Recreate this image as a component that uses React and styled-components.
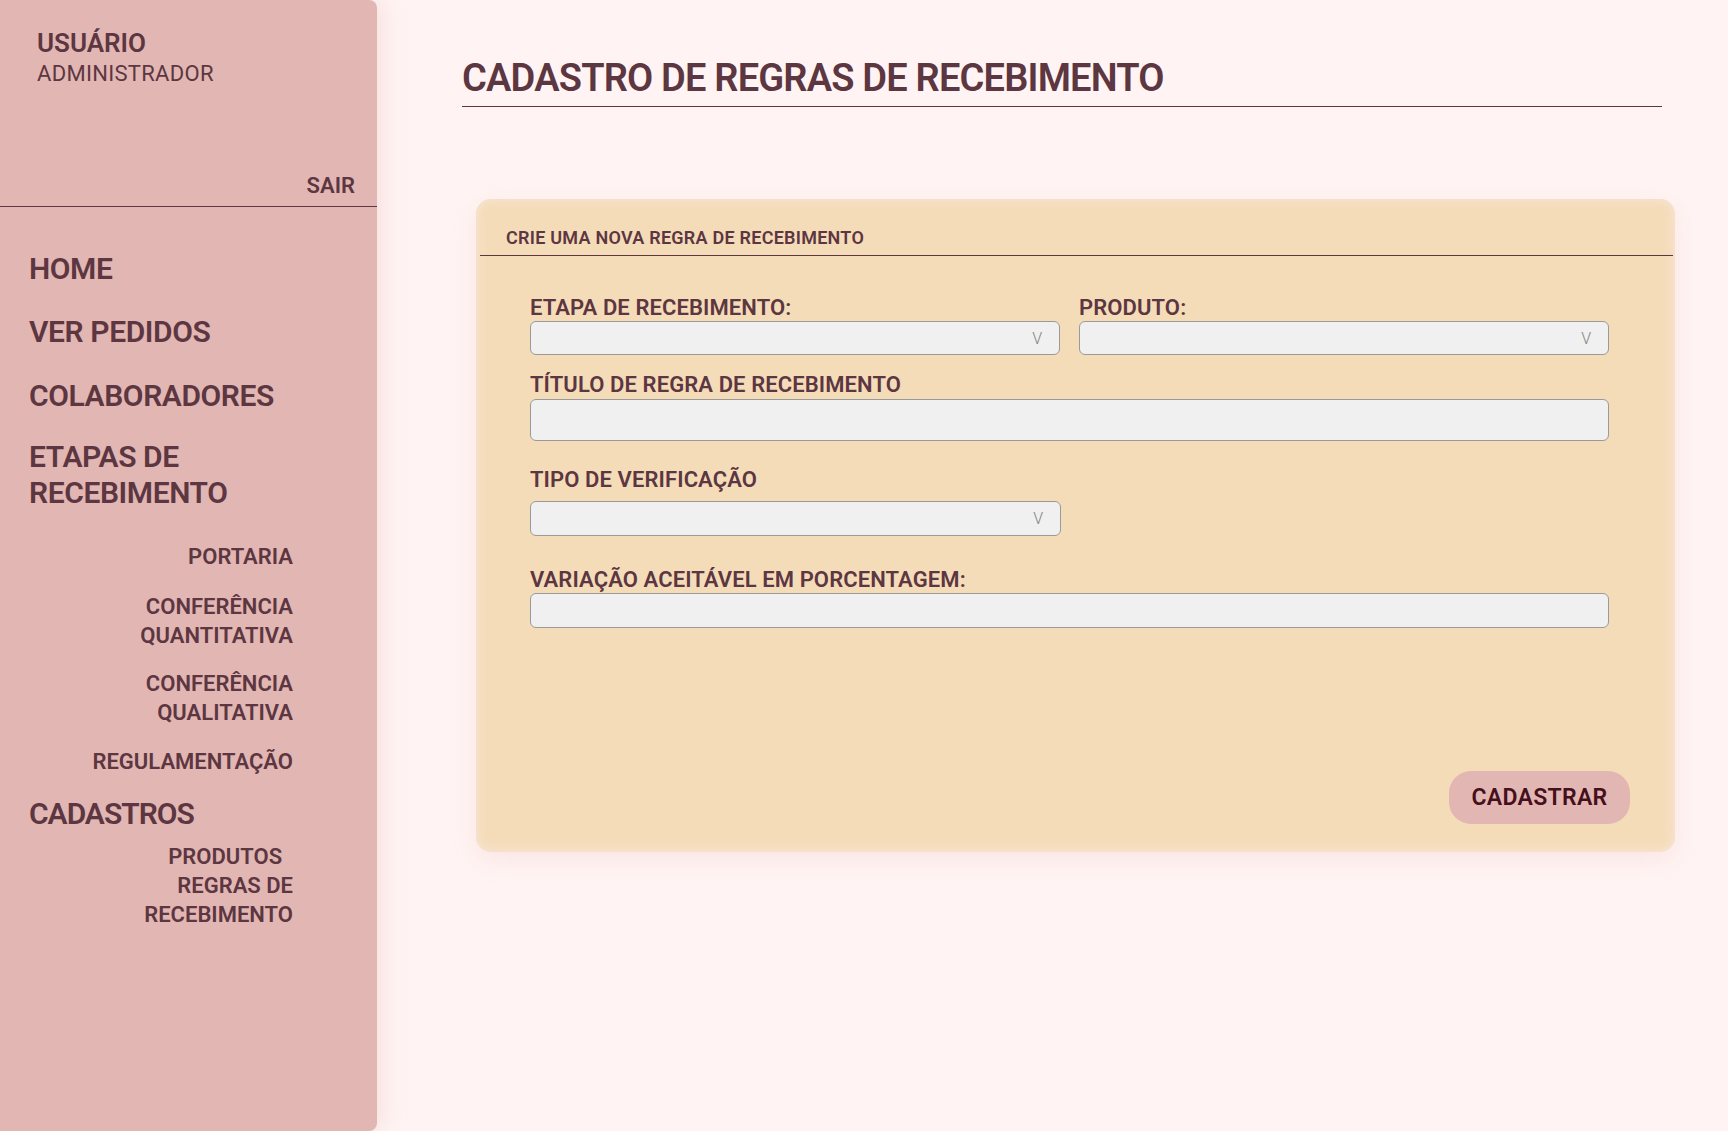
import React from 'react';
import styled, { createGlobalStyle } from 'styled-components';

const wine = '#5c3641';
const rose = '#e2b6b2';

const GlobalStyle = createGlobalStyle`
  html, body {
    margin: 0;
    padding: 0;
    background-color: #fff4f3;
    font-family: Roboto, "Noto Sans", sans-serif;
    color: ${wine};
  }
  * {
    box-sizing: border-box;
  }
`;

const PageStyled = styled.div`
  display: flex;
  min-height: 100vh;
`;

/* ---------- sidebar ---------- */

const SidebarStyled = styled.aside`
  flex: 0 0 377px;
  height: 100vh;
  background-color: ${rose};
  border-radius: 0 8px 8px 0;
  box-shadow: 6px 0 22px rgba(232, 190, 190, 0.35);
  display: flex;
  flex-direction: column;
`;
const UserBoxStyled = styled.div`
  height: 207px;
  padding: 28px 22px 7px 37px;
  border-bottom: 1px solid ${wine};
  display: flex;
  flex-direction: column;
`;
const UserNameStyled = styled.div`
  font-size: 26px;
  line-height: 30px;
  font-weight: 600;
`;
const UserRoleStyled = styled.div`
  margin-top: 3px;
  font-size: 22px;
  line-height: 26px;
  font-weight: 400;
  letter-spacing: 0.3px;
`;
const LogoutStyled = styled.a`
  margin-top: auto;
  align-self: flex-end;
  font-size: 22px;
  line-height: 26px;
  font-weight: 600;
  cursor: pointer;
`;
const NavStyled = styled.nav`
  padding: 44px 84px 0 29px;
  display: flex;
  flex-direction: column;
`;
const NavItemStyled = styled.a`
  margin-top: ${(p) => p.$gap}px;
  font-size: 30px;
  line-height: 36px;
  font-weight: 600;
  letter-spacing: ${(p) => (p.$tight ? '-1px' : '-0.4px')};
  cursor: pointer;
`;
const SubItemStyled = styled.a`
  margin-top: ${(p) => p.$gap}px;
  text-align: right;
  font-size: 22px;
  line-height: 29px;
  font-weight: 600;
  letter-spacing: 0;
  cursor: pointer;
`;

/* ---------- main ---------- */

const MainStyled = styled.main`
  flex: 1;
  padding: 56px 66px 0 85px;
`;
const TitleStyled = styled.h1`
  margin: 0;
  padding-bottom: 6px;
  border-bottom: 1px solid ${wine};
  font-size: 38px;
  line-height: 44px;
  font-weight: 600;
  letter-spacing: -0.8px;
`;
const CardStyled = styled.section`
  margin: 92px -13px 0 14px;
  height: 653px;
  border-radius: 15px;
  background-color: #f5dcb9;
  box-shadow:
    inset 0 0 10px 2px rgba(246, 228, 214, 0.9),
    0 8px 22px rgba(232, 180, 180, 0.22);
  display: flex;
  flex-direction: column;
`;
const CardHeaderStyled = styled.h2`
  margin: 0 2px 0 4px;
  padding: 28px 0 6px 26px;
  border-bottom: 1px solid ${wine};
  font-size: 18px;
  line-height: 22px;
  font-weight: 600;
  letter-spacing: 0.25px;
`;
const FormStyled = styled.form`
  flex: 1;
  padding: 40px 66px 28px 54px;
  display: flex;
  flex-direction: column;
`;
const RowStyled = styled.div`
  display: grid;
  grid-template-columns: 1fr 1fr;
  column-gap: 19px;
`;
const FieldStyled = styled.div`
  margin-top: ${(p) => p.$top || 0}px;
  width: ${(p) => (p.$half ? '531px' : 'auto')};
  display: flex;
  flex-direction: column;
`;
const LabelStyled = styled.label`
  margin-bottom: ${(p) => p.$gap}px;
  font-size: 22px;
  line-height: 24px;
  font-weight: 600;
  letter-spacing: 0.1px;
`;
const SelectBoxStyled = styled.div`
  height: ${(p) => p.$height}px;
  padding-right: 17px;
  border: 1px solid #9a9a9a;
  border-radius: 6px;
  background-color: #f0f0f0;
  display: flex;
  align-items: center;
  justify-content: flex-end;
  cursor: pointer;
`;
const CaretStyled = styled.span`
  font-size: 16px;
  font-weight: 300;
  color: #858585;
`;
const InputStyled = styled.input`
  height: ${(p) => p.$height}px;
  width: 100%;
  padding: 0 12px;
  border: 1px solid #9a9a9a;
  border-radius: 6px;
  background-color: #f0f0f0;
  font-family: inherit;
  font-size: 18px;
  outline: none;
`;
const ActionsStyled = styled.div`
  margin-top: auto;
  margin-right: -21px;
  display: flex;
  justify-content: flex-end;
`;
const ButtonStyled = styled.button`
  width: 181px;
  height: 53px;
  border: none;
  border-radius: 22px;
  background-color: ${rose};
  color: #45101c;
  font-family: inherit;
  font-size: 23px;
  font-weight: 600;
  letter-spacing: 0.3px;
  cursor: pointer;
`;

const SelectField = ({ label, labelGap, height, top, half }) => (
  <FieldStyled $top={top} $half={half}>
    <LabelStyled $gap={labelGap}>{label}</LabelStyled>
    <SelectBoxStyled $height={height}>
      <CaretStyled>V</CaretStyled>
    </SelectBoxStyled>
  </FieldStyled>
);

const InputField = ({ label, labelGap, height, top }) => (
  <FieldStyled $top={top}>
    <LabelStyled $gap={labelGap}>{label}</LabelStyled>
    <InputStyled $height={height} type="text" />
  </FieldStyled>
);

const Sidebar = () => (
  <SidebarStyled>
    <UserBoxStyled>
      <UserNameStyled>USUÁRIO</UserNameStyled>
      <UserRoleStyled>ADMINISTRADOR</UserRoleStyled>
      <LogoutStyled>SAIR</LogoutStyled>
    </UserBoxStyled>
    <NavStyled>
      <NavItemStyled $gap={0}>HOME</NavItemStyled>
      <NavItemStyled $gap={27}>VER PEDIDOS</NavItemStyled>
      <NavItemStyled $gap={28}>COLABORADORES</NavItemStyled>
      <NavItemStyled $gap={25}>
        ETAPAS DE
        <br />
        RECEBIMENTO
      </NavItemStyled>
      <SubItemStyled $gap={31}>PORTARIA</SubItemStyled>
      <SubItemStyled $gap={21}>
        CONFERÊNCIA
        <br />
        QUANTITATIVA
      </SubItemStyled>
      <SubItemStyled $gap={19}>
        CONFERÊNCIA
        <br />
        QUALITATIVA
      </SubItemStyled>
      <SubItemStyled $gap={20}>REGULAMENTAÇÃO</SubItemStyled>
      <NavItemStyled $gap={20} $tight>CADASTROS</NavItemStyled>
      <SubItemStyled $gap={10}>PRODUTOS&nbsp;&nbsp;</SubItemStyled>
      <SubItemStyled $gap={0}>
        REGRAS DE
        <br />
        RECEBIMENTO
      </SubItemStyled>
    </NavStyled>
  </SidebarStyled>
);

const App = () => (
  <PageStyled>
    <GlobalStyle />
    <Sidebar />
    <MainStyled>
      <TitleStyled>CADASTRO DE REGRAS DE RECEBIMENTO</TitleStyled>
      <CardStyled>
        <CardHeaderStyled>CRIE UMA NOVA REGRA DE RECEBIMENTO</CardHeaderStyled>
        <FormStyled onSubmit={(e) => e.preventDefault()}>
          <RowStyled>
            <SelectField label="ETAPA DE RECEBIMENTO:" labelGap={1} height={34} />
            <SelectField label="PRODUTO:" labelGap={1} height={34} />
          </RowStyled>
          <InputField label="TÍTULO DE REGRA DE RECEBIMENTO" labelGap={2} height={42} top={18} />
          <SelectField label="TIPO DE VERIFICAÇÃO" labelGap={9} height={35} top={27} half />
          <InputField label="VARIAÇÃO ACEITÁVEL EM PORCENTAGEM:" labelGap={1} height={35} top={32} />
          <ActionsStyled>
            <ButtonStyled type="submit">CADASTRAR</ButtonStyled>
          </ActionsStyled>
        </FormStyled>
      </CardStyled>
    </MainStyled>
  </PageStyled>
);

export default App;
